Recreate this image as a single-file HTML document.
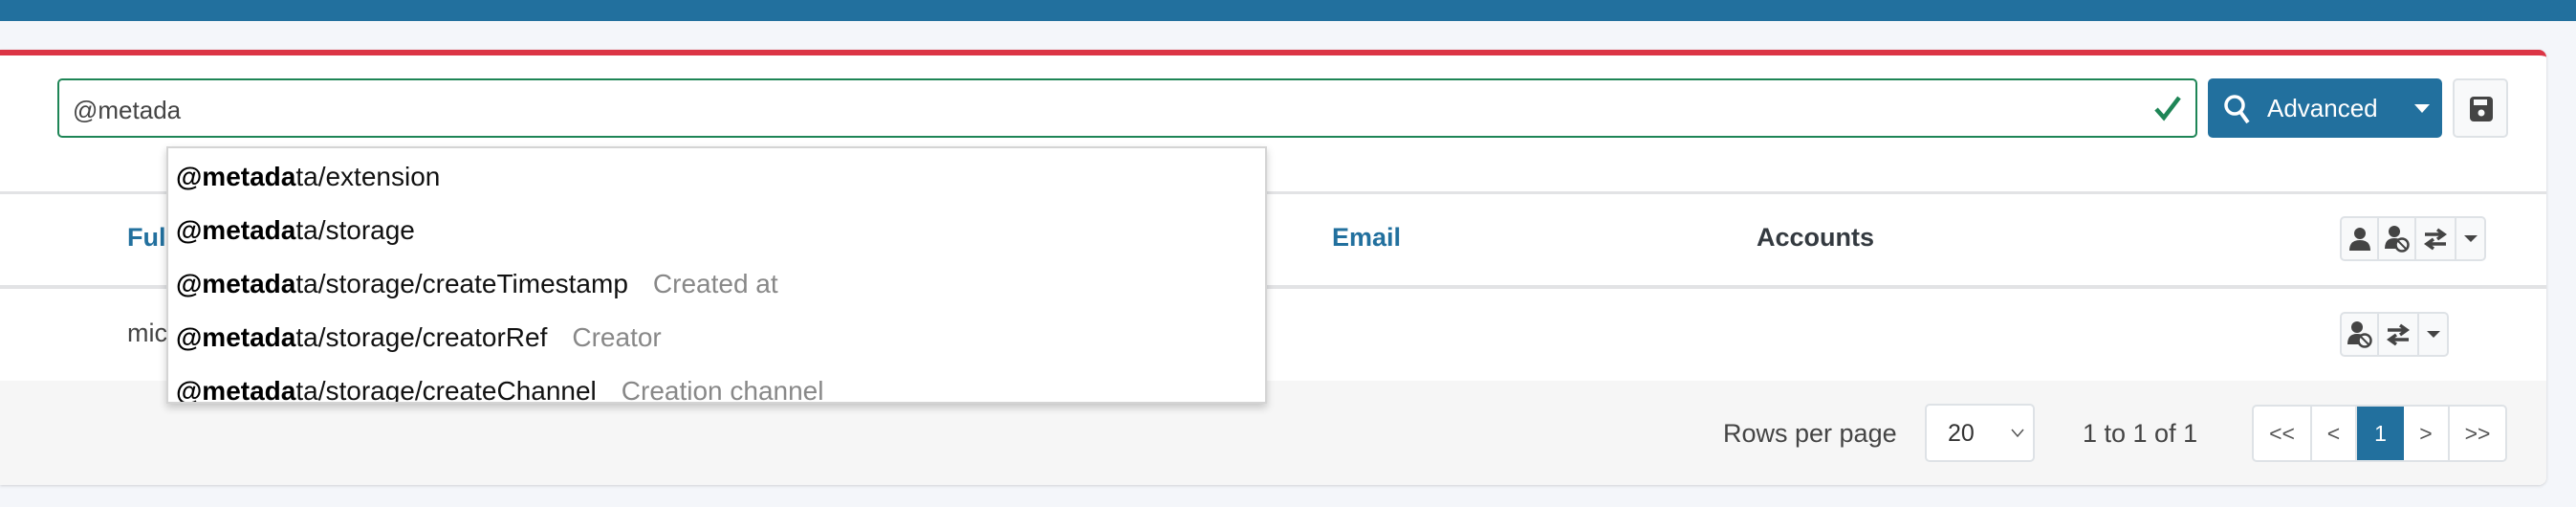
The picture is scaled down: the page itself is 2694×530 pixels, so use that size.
<!DOCTYPE html>
<html><head><meta charset="utf-8"><style>
*{box-sizing:border-box;margin:0;padding:0}
body{width:2694px;height:530px;background:#f4f6fa;font-family:"Liberation Sans",sans-serif;position:relative;overflow:hidden;color:#212529}
.abs{position:absolute}
.topbar{left:0;top:0;width:2694px;height:22px;background:#22709e}
.card{left:0;top:52px;width:2663px;height:455px;background:#fff;border-top:6px solid #dc3545;border-radius:0 8px 8px 0;box-shadow:0 1px 3px rgba(0,0,0,.15)}
.input{left:60px;top:82px;width:2238px;height:62px;border:2px solid #1e8556;border-radius:5px;background:#fff;font-size:26px;color:#444;padding:16px 0 0 14px}
.btn{left:2309px;top:82px;width:245px;height:62px;background:#22709e;border-radius:5px;color:#fff;font-size:26px}
.save{left:2565px;top:82px;width:58px;height:62px;background:#f8f9fa;border:2px solid #dee2e6;border-radius:5px}
.hl{height:3px;background:#e2e3e5}
.th{font-size:27px;font-weight:bold;top:233px}
.grp{border:2px solid #dee2e6;border-radius:5px;background:#f8f9fa;display:flex}
.grp div{border-right:2px solid #dee2e6;display:flex;align-items:center;justify-content:center}
.grp div:last-child{border-right:none}
.footer{left:0;top:398px;width:2663px;height:109px;background:#f6f6f6;border-radius:0 0 8px 0}
.dd{left:174px;top:153px;width:1151px;height:269px;background:#fff;border:2px solid #d4d4d4;box-shadow:0 4px 8px rgba(0,0,0,.2);overflow:hidden}
.dd div{height:56px;font-size:28px;padding:14px 0 0 8px;color:#111;white-space:nowrap}
.dd b{color:#000}
.dd span{color:#888;margin-left:26px}
.pg{left:2355px;top:423px;width:267px;height:60px;border:2px solid #dee2e6;border-radius:5px;background:#fff;display:flex;font-size:23px;color:#555}
.pg div{display:flex;align-items:center;justify-content:center;border-right:2px solid #dee2e6}
.pg div:last-child{border-right:none}
</style></head><body>
<div class="abs topbar"></div>
<div class="abs card"></div>
<div class="abs input">@metada</div>
<svg class="abs" style="left:2252px;top:98px" width="30" height="30" viewBox="0 0 30 30"><path d="M3 16 L11 25 L27 4" stroke="#1e8556" stroke-width="4.5" fill="none"/></svg>
<div class="abs btn">
<svg class="abs" style="left:16px;top:16px" width="30" height="34" viewBox="0 0 30 34"><circle cx="12" cy="12" r="9" stroke="#fff" stroke-width="3.5" fill="none"/><path d="M18 19 L26 30" stroke="#fff" stroke-width="4"/></svg>
<span class="abs" style="left:62px;top:16px">Advanced</span>
<svg class="abs" style="left:216px;top:27px" width="16" height="10"><path d="M0 0 H16 L8 9Z" fill="#fff"/></svg>
</div>
<div class="abs save"><svg class="abs" style="left:16px;top:17px" width="24" height="26" viewBox="0 0 24 26"><rect x="0" y="0" width="24" height="26" rx="4" fill="#444"/><rect x="4" y="3" width="14" height="6" fill="#f8f9fa"/><circle cx="12" cy="17" r="3.5" fill="#f8f9fa"/></svg></div>
<div class="abs hl" style="left:0;top:200px;width:2663px"></div>
<div class="abs th" style="left:133px;color:#22709e">Full name</div>
<div class="abs th" style="left:1393px;color:#22709e">Email</div>
<div class="abs th" style="left:1837px;color:#343a40">Accounts</div>
<div class="abs grp" style="left:2447px;top:226px;width:153px;height:47px">
<div style="width:39px"><svg width="22" height="24"><circle cx="11" cy="6" r="6" fill="#444"/><path d="M0 24 Q0 13 11 13 Q22 13 22 24Z" fill="#444"/></svg></div>
<div style="width:39px"><svg width="26" height="28"><circle cx="10" cy="6" r="6" fill="#444"/><path d="M0 24 Q0 13 10 13 Q15 13 17 15 L12 24Z" fill="#444"/><circle cx="18" cy="20" r="6.5" stroke="#444" stroke-width="2.5" fill="#f8f9fa"/><path d="M14 16 L22 24" stroke="#444" stroke-width="2"/></svg></div>
<div style="width:42px"><svg width="26" height="24"><path d="M2 7 H20 M15 2 L22 7 L15 12 M24 17 H6 M11 12 L4 17 L11 22" stroke="#444" stroke-width="3.5" fill="none"/></svg></div>
<div style="flex:1"><svg width="14" height="8"><path d="M0 0 H14 L7 7Z" fill="#444"/></svg></div>
</div>
<div class="abs hl" style="left:0;top:298px;width:2663px;height:4px"></div>
<div class="abs" style="left:133px;top:333px;font-size:27px;color:#444">michael</div>
<div class="abs grp" style="left:2447px;top:326px;width:114px;height:47px">
<div style="width:39px"><svg width="26" height="28"><circle cx="10" cy="6" r="6" fill="#444"/><path d="M0 24 Q0 13 10 13 Q15 13 17 15 L12 24Z" fill="#444"/><circle cx="18" cy="20" r="6.5" stroke="#444" stroke-width="2.5" fill="#f8f9fa"/><path d="M14 16 L22 24" stroke="#444" stroke-width="2"/></svg></div>
<div style="width:42px"><svg width="26" height="24"><path d="M2 7 H20 M15 2 L22 7 L15 12 M24 17 H6 M11 12 L4 17 L11 22" stroke="#444" stroke-width="3.5" fill="none"/></svg></div>
<div style="flex:1"><svg width="14" height="8"><path d="M0 0 H14 L7 7Z" fill="#444"/></svg></div>
</div>
<div class="abs footer"></div>
<div class="abs" style="left:1802px;top:438px;font-size:27px;color:#444">Rows per page</div>
<div class="abs" style="left:2013px;top:422px;width:115px;height:61px;background:#fff;border:2px solid #dee2e6;border-radius:5px;font-size:25px;color:#333">
<span class="abs" style="left:22px;top:15px">20</span>
<svg class="abs" style="left:88px;top:24px" width="14" height="10"><path d="M1 1 L7 8 L13 1" stroke="#555" stroke-width="1.5" fill="none"/></svg></div>
<div class="abs" style="left:2178px;top:438px;font-size:27px;color:#444">1 to 1 of 1</div>
<div class="abs pg">
<div style="width:61px">&lt;&lt;</div><div style="width:47px">&lt;</div><div style="width:49px;background:#22709e;color:#fff;border-right:none">1</div><div style="width:48px">&gt;</div><div style="flex:1">&gt;&gt;</div>
</div>
<div class="abs dd">
<div><b>@metada</b>ta/extension</div>
<div><b>@metada</b>ta/storage</div>
<div><b>@metada</b>ta/storage/createTimestamp<span>Created at</span></div>
<div><b>@metada</b>ta/storage/creatorRef<span>Creator</span></div>
<div><b>@metada</b>ta/storage/createChannel<span>Creation channel</span></div>
</div>
</body></html>
